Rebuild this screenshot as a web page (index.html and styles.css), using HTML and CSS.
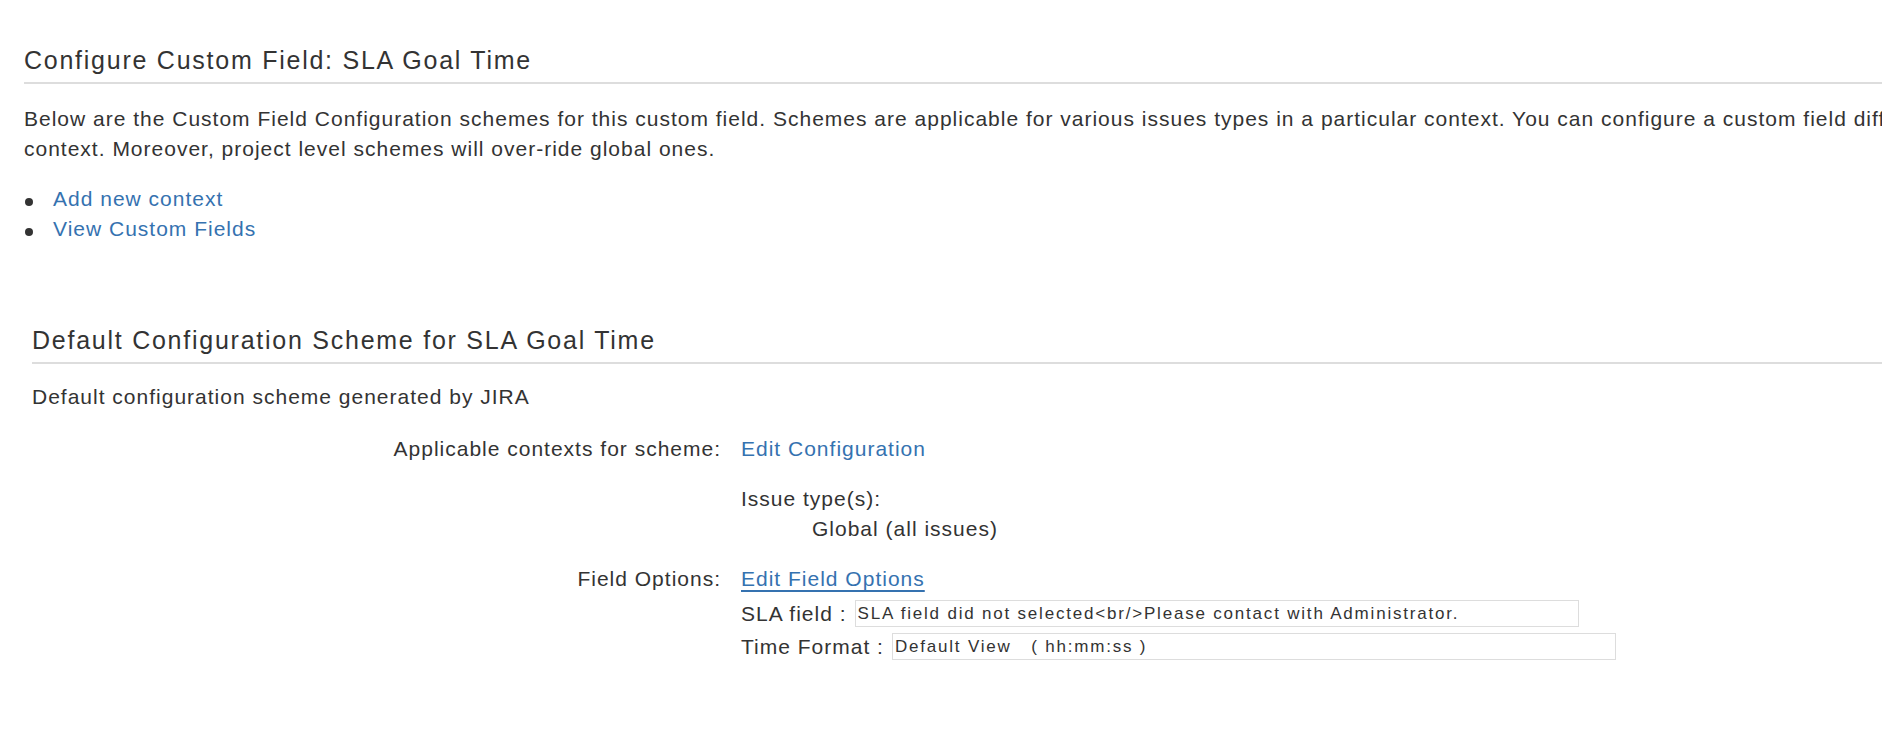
FILE: index.html
```html
<html>

<head>
  <title>Configure Custom Field: SLA Goal Time</title>
  <link rel="stylesheet" href="styles.css">
</head>

<body>
  <div id="content">

    <h2 class="page-title">Configure Custom Field: SLA Goal Time</h2>

    <p class="intro">Below are the Custom Field Configuration schemes for this custom field. Schemes are applicable for various issues types in a particular context. You can configure a custom field differently for each project context. Moreover, project level schemes will over-ride global ones.</p>

    <ul class="actions">
      <li><a href="#">Add new context</a></li>
      <li><a href="#">View Custom Fields</a></li>
    </ul>

    <div class="scheme">
      <h3 class="scheme-title">Default Configuration Scheme for SLA Goal Time</h3>
      <p class="scheme-desc">Default configuration scheme generated by JIRA</p>

      <div class="scheme-table">
        <div class="label">Applicable contexts for scheme:</div>
        <div class="value">
          <a href="#">Edit Configuration</a>
          <div class="contexts">
            <div>Issue type(s):</div>
            <div class="context-item">Global (all issues)</div>
          </div>
        </div>

        <div class="label">Field Options:</div>
        <div class="value">
          <a href="#" class="hover">Edit Field Options</a>
          <div class="options">
            <div class="option-row">
              <span>SLA field :</span>
              <input type="text" value="SLA field did not selected<br/>Please contact with Administrator.">
            </div>
            <div class="option-row">
              <span>Time Format :</span>
              <input type="text" value="Default View   ( hh:mm:ss )">
            </div>
          </div>
        </div>
      </div>
    </div>
  </div>
</body>

</html>
```

FILE: styles.css
```css
html,
body {
  overflow: hidden;
}

body {
  background: white;
  margin: 0;
  color: #333;
  font-family: "Liberation Sans", Arial, sans-serif;
  font-size: 21px;
  line-height: 30px;
  letter-spacing: 1px;
}

#content {
  width: 2150px;
  padding: 45px 0 40px 24px;
}

a,
a:link,
a:visited {
  color: #3572b0;
  text-decoration: none;
}

a.hover {
  text-decoration: underline;
  text-decoration-thickness: 2px;
  text-underline-offset: 4px;
}

h2,
h3 {
  font-weight: 400;
  font-size: 25px;
  letter-spacing: 1.75px;
  line-height: 30px;
  margin: 0;
  padding-bottom: 7px;
  border-bottom: 2px solid #dddddd;
}

p {
  margin: 0;
}

.intro {
  margin-top: 20px;
}

.actions {
  list-style: none;
  margin: 20px 0 0;
  padding: 0;
}

.actions li::before {
  content: "";
  display: inline-block;
  width: 8px;
  height: 8px;
  margin: 0 20px 0 1px;
  border-radius: 50%;
  background: #333;
}

.scheme {
  margin-top: 81px;
  padding-left: 8px;
}

.scheme-desc {
  margin-top: 18px;
}

.scheme-table {
  display: grid;
  grid-template-columns: 689px 1fr;
  column-gap: 20px;
  row-gap: 20px;
  margin-top: 22px;
}

.label {
  text-align: right;
}

.contexts {
  margin-top: 20px;
}

.context-item {
  padding-left: 71px;
}

.options {
  padding-top: 3px;
}

.option-row {
  display: flex;
  align-items: center;
  gap: 8px;
  height: 33px;
}

.option-row input {
  width: 724px;
  height: 27px;
  box-sizing: border-box;
  border: 1px solid #ddd;
  padding: 0 2px;
  font-family: "Liberation Sans", Arial, sans-serif;
  font-size: 17px;
  letter-spacing: 1.8px;
  color: #333;
  background: white;
}
```
